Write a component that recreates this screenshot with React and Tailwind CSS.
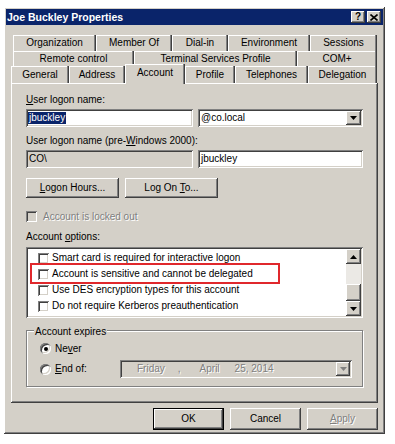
const RAISED =
  "shadow-[inset_-1px_-1px_#404040,inset_1px_1px_#ffffff,inset_-2px_-2px_#808080,inset_2px_2px_#d4d0c8]";
const SUNKEN =
  "shadow-[inset_1px_1px_#808080,inset_-1px_-1px_#ffffff,inset_2px_2px_#404040,inset_-2px_-2px_#d4d0c8]";
const TAB = "shadow-[inset_-1px_0_#404040,inset_-2px_0_#808080,inset_1px_1px_#ffffff]";
const DISABLED_TEXT = "text-[#808080] [text-shadow:1px_1px_0_#ffffff]";

const ROW1 = [
  { label: "Organization", w: "w-[83px]" },
  { label: "Member Of", w: "w-[76px]" },
  { label: "Dial-in", w: "w-[56px]" },
  { label: "Environment", w: "w-[82px]" },
  { label: "Sessions", w: "w-[67px]" },
];

const ROW2 = [
  { label: "Remote control", w: "w-[121px]" },
  { label: "Terminal Services Profile", w: "w-[163px]" },
  { label: "COM+", w: "w-[80px]" },
];

const ROW3 = [
  { label: "General", w: "w-[58px]" },
  { label: "Address", w: "w-[56px]" },
  { label: "Account", w: "w-[60px]", active: true },
  { label: "Profile", w: "w-[50px]" },
  { label: "Telephones", w: "w-[73px]" },
  { label: "Delegation", w: "w-[69px]" },
];

const OPTIONS = [
  "Smart card is required for interactive logon",
  "Account is sensitive and cannot be delegated",
  "Use DES encryption types for this account",
  "Do not require Kerberos preauthentication",
];

function Arrow({ up, color = "#000000" }) {
  return (
    <svg width="7" height="4" viewBox="0 0 7 4">
      <path d={up ? "M0 4 L3.5 0 L7 4 Z" : "M0 0 L7 0 L3.5 4 Z"} fill={color} />
    </svg>
  );
}

function Check({ disabled }) {
  return (
    <div className={`w-[11px] h-[11px] shrink-0 ${disabled ? "bg-[#d4d0c8]" : "bg-white"} ${SUNKEN}`} />
  );
}

function Radio({ checked }) {
  return (
    <div
      className={`w-[11px] h-[11px] shrink-0 rounded-full bg-white flex items-center justify-center ${SUNKEN}`}
    >
      {checked && <div className="w-[4px] h-[4px] rounded-full bg-black" />}
    </div>
  );
}

function TabRow({ tabs, className }) {
  return (
    <div className={`flex ${className}`}>
      {tabs.map((t) => (
        <div
          key={t.label}
          className={`${t.w} flex items-center justify-center ${TAB} ${
            t.active ? "relative z-10 h-[20px] -mb-[1px] -mt-[2px] bg-[#d4d0c8] pb-[3px]" : "h-full"
          }`}
        >
          {t.label}
        </div>
      ))}
    </div>
  );
}

export default function App() {
  return (
    <div className="w-[395px] h-[444px] bg-white pt-[7px] pl-[4px] font-['Liberation_Sans',Arial,sans-serif] text-[10px] leading-[12px] text-black">
      <div className={`w-[381px] h-[427px] bg-[#d4d0c8] p-[2px] ${RAISED}`}>
        {/* Title bar */}
        <div className="h-[16px] bg-[#0a246a] flex items-center pl-[1px] pr-[2px]">
          <span className="text-white font-bold text-[10.5px] leading-[12px]">Joe Buckley Properties</span>
          <div className="ml-auto flex gap-[2px]">
            <div
              className={`w-[14px] h-[12px] bg-[#d4d0c8] flex items-center justify-center font-bold text-[10px] leading-[10px] ${RAISED}`}
            >
              ?
            </div>
            <div className={`w-[14px] h-[12px] bg-[#d4d0c8] flex items-center justify-center ${RAISED}`}>
              <svg width="8" height="7" viewBox="0 0 8 7">
                <path d="M0.5 0.5 L7.5 6.5 M7.5 0.5 L0.5 6.5" stroke="#000" strokeWidth="1.6" />
              </svg>
            </div>
          </div>
        </div>

        <div className="ml-[5px] mt-[10px] w-[367px]">
          {/* Tabs */}
          <TabRow tabs={ROW1} className="ml-[2px] h-[16px]" />
          <TabRow tabs={ROW2} className="ml-[2px] h-[15px]" />
          <TabRow tabs={ROW3} className="h-[17px] items-end" />

          {/* Panel */}
          <div className={`h-[320px] pl-[15px] pt-[11px] ${RAISED}`}>
            <div>
              <u>U</u>ser logon name:
            </div>
            <div className="flex mt-[3px]">
              <div className={`w-[167px] h-[18px] bg-white flex items-center pl-[2px] ${SUNKEN}`}>
                <span className="bg-[#0a246a] text-white px-[1px]">jbuckley</span>
              </div>
              <div className={`w-[165px] h-[18px] ml-[5px] bg-white flex items-center pl-[3px] ${SUNKEN}`}>
                <span>@co.local</span>
                <div className={`ml-auto mr-[2px] w-[15px] h-[14px] bg-[#d4d0c8] flex items-center justify-center ${RAISED}`}>
                  <Arrow />
                </div>
              </div>
            </div>

            <div className="mt-[8px]">
              User logon name (pre-<u>W</u>indows 2000):
            </div>
            <div className="flex mt-[3px]">
              <div className={`w-[167px] h-[18px] bg-[#d4d0c8] flex items-center pl-[3px] ${SUNKEN}`}>CO\</div>
              <div className={`w-[165px] h-[18px] ml-[5px] bg-white flex items-center pl-[3px] ${SUNKEN}`}>
                jbuckley
              </div>
            </div>

            <div className="flex gap-[6px] mt-[10px]">
              <div className={`w-[93px] h-[20px] flex items-center justify-center ${RAISED}`}>
                <span>
                  <u>L</u>ogon Hours...
                </span>
              </div>
              <div className={`w-[93px] h-[20px] flex items-center justify-center ${RAISED}`}>
                <span>
                  Log On <u>T</u>o...
                </span>
              </div>
            </div>

            <div className="flex items-center h-[13px] mt-[12px]">
              <Check disabled />
              <span className={`ml-[6px] ${DISABLED_TEXT}`}>Account is locked out</span>
            </div>

            <div className="mt-[8px]">
              Account <u>o</u>ptions:
            </div>

            {/* Options list */}
            <div className={`relative w-[337px] h-[71px] mt-[4px] bg-white p-[2px] flex ${SUNKEN}`}>
              <div className="flex-1 pt-[1px]">
                {OPTIONS.map((o) => (
                  <div key={o} className="h-[16px] flex items-center pl-[10px]">
                    <Check />
                    <span className="ml-[3px]">{o}</span>
                  </div>
                ))}
              </div>
              <div className="w-[15px] flex flex-col">
                <div className={`h-[15px] bg-[#d4d0c8] flex items-center justify-center ${RAISED}`}>
                  <Arrow up />
                </div>
                <div className="flex-1 bg-[#ebe9e5]" />
                <div className={`h-[17px] bg-[#d4d0c8] ${RAISED}`} />
                <div className={`h-[15px] bg-[#d4d0c8] flex items-center justify-center ${RAISED}`}>
                  <Arrow />
                </div>
              </div>
              <div className="absolute left-[4px] top-[16px] w-[250px] h-[21px] border-2 border-[#e0282c]" />
            </div>

            {/* Account expires */}
            <div className="w-[337px] h-[57px] mt-[12px] border border-[#808080] shadow-[1px_1px_0_#ffffff,inset_1px_1px_0_#ffffff]">
              <div className="-mt-[5px] ml-[7px] w-fit px-[1px] bg-[#d4d0c8]">Account expires</div>
              <div className="flex items-center h-[13px] mt-[4px] ml-[13px]">
                <Radio checked />
                <span className="ml-[4px]">
                  Ne<u>v</u>er
                </span>
              </div>
              <div className="flex items-center h-[18px] mt-[5px] ml-[13px]">
                <div className="w-[80px] flex items-center">
                  <Radio />
                  <span className="ml-[4px]">
                    <u>E</u>nd of:
                  </span>
                </div>
                <div className={`w-[232px] h-[18px] bg-[#d4d0c8] flex items-center ${SUNKEN} ${DISABLED_TEXT}`}>
                  <span className="ml-[17px]">Friday</span>
                  <span className="ml-[13px]">,</span>
                  <span className="ml-[19px]">April</span>
                  <span className="ml-[15px]">25, 2014</span>
                  <div
                    className={`ml-auto mr-[2px] w-[14px] h-[14px] bg-[#d4d0c8] flex items-center justify-center ${RAISED}`}
                  >
                    <Arrow color="#808080" />
                  </div>
                </div>
              </div>
            </div>
          </div>

          {/* Dialog buttons */}
          <div className="flex justify-end gap-[6px] mt-[5px]">
            <div className={`w-[71px] h-[22px] border border-black flex items-center justify-center ${RAISED}`}>
              OK
            </div>
            <div className={`w-[71px] h-[22px] flex items-center justify-center ${RAISED}`}>Cancel</div>
            <div className={`w-[71px] h-[22px] flex items-center justify-center ${RAISED} ${DISABLED_TEXT}`}>
              <span>
                <u>A</u>pply
              </span>
            </div>
          </div>
        </div>
      </div>
    </div>
  );
}
